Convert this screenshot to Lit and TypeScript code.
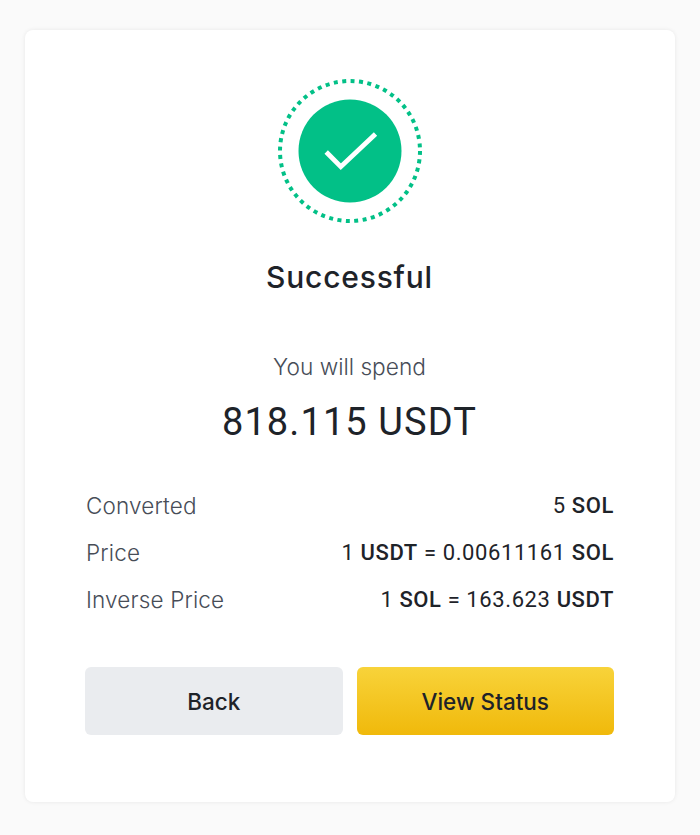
import { LitElement, html, css } from "lit";
import { customElement } from "lit/decorators.js";

@customElement("app-root")
export class AppRoot extends LitElement {
  static styles = css`
    :host { display: block; height: 835px; background: #fafafa; padding: 30px 25px 33px; box-sizing: border-box; font-family: "Inter", "Liberation Sans", sans-serif; }
    .card { box-sizing: border-box; height: 772px; background: #fff; border-radius: 8px; box-shadow: 0 0 4px rgba(0,0,0,.08); padding: 47px 61px 0 60px; display: flex; flex-direction: column; align-items: stretch; }
    .icon { display: block; width: 148px; height: 148px; align-self: center; }
    h1 { margin: 32px 0 0; font-size: 30px; letter-spacing: 0.8px; line-height: 40px; font-weight: 500; color: #1e2329; text-align: center; }
    .spend { margin-top: 55px; font-size: 22.700px; line-height: 30px; color: #474d57; text-align: center; font-weight: 300; }
    .amount { margin-top: 16px; font-size: 38px; letter-spacing: 1.100px; line-height: 48px; color: #1e2329; text-align: center; font-family: "Roboto", sans-serif; font-weight: 400; }
    .rows { margin-top: 43px; display: flex; flex-direction: column; gap: 15px; }
    .row { display: flex; justify-content: space-between; height: 32px; align-items: center; }
    .k { color: #474d57; font-size: 22.500px; letter-spacing: 0.15px; font-weight: 300; padding-left: 1px; }
    .v { color: #1e2329; font-family: "Roboto", sans-serif; font-size: 22px; letter-spacing: 0.6px; }
    .v b { font-weight: 500; }
    .btns { margin-top: 52px; display: grid; grid-template-columns: 1fr 1fr; gap: 14px; }
    .btn { height: 68px; border: 0; border-radius: 6px; font: 500 22.500px "Inter", sans-serif; color: #1e2329; background: #eaecef; padding: 0; }
    .primary { background: linear-gradient(180deg, #f8d33a 0%, #f0b90b 100%); }
  `;
  render() {
    return html`<div class="card">
      <svg class="icon" viewBox="0 0 148 148">
        <circle cx="74" cy="74" r="70" fill="none" stroke="#02c087" stroke-width="4" stroke-dasharray="4 4.46"></circle>
        <circle cx="74" cy="74" r="51.500" fill="#02c087"></circle>
        <path d="M50.200 75 L64.800 89.700 L99.500 57" fill="none" stroke="#fff" stroke-width="4.800"></path>
      </svg>
      <h1>Successful</h1>
      <div class="spend">You will spend</div>
      <div class="amount">818.115 USDT</div>
      <div class="rows">
        <div class="row"><span class="k">Converted</span><span class="v">5 <b>SOL</b></span></div>
        <div class="row"><span class="k">Price</span><span class="v">1 <b>USDT</b> = 0.00611161 <b>SOL</b></span></div>
        <div class="row"><span class="k">Inverse Price</span><span class="v">1 <b>SOL</b> = 163.623 <b>USDT</b></span></div>
      </div>
      <div class="btns"><button class="btn">Back</button><button class="btn primary">View Status</button></div>
    </div>`;
  }
}
